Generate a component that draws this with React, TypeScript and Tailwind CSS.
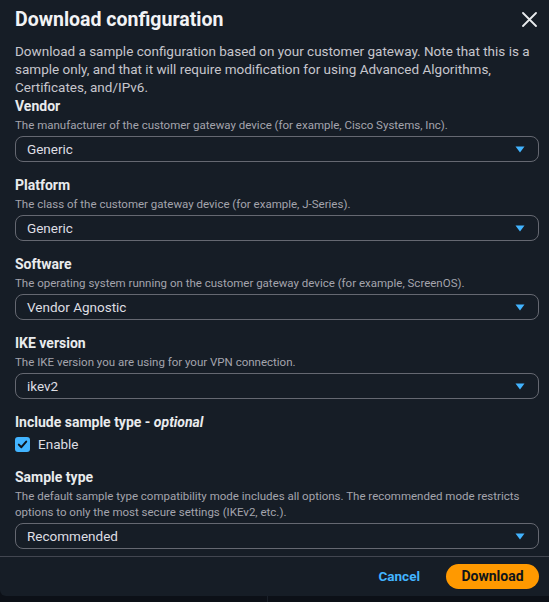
import React from "react";

function Caret() {
  return (
    <svg width="10" height="7" viewBox="0 0 10 7" className="shrink-0">
      <path d="M0.5 0.5 H9.5 L5 6.5 Z" fill="#42b4ff" />
    </svg>
  );
}

function Select({ value }: { value: string }) {
  return (
    <div className="mt-[3px] h-[26px] rounded-[8px] border border-[#656871] pl-[11px] pr-[13px] flex items-center justify-between text-[13.5px] leading-[18px] text-[#dedee3]">
      <span>{value}</span>
      <Caret />
    </div>
  );
}

function Field({
  label,
  desc,
  value,
  className = "",
}: {
  label: string;
  desc: React.ReactNode;
  value: string;
  className?: string;
}) {
  return (
    <div className={className}>
      <div className="text-[14px] leading-[18px] font-bold text-[#e9ebed]">{label}</div>
      <div className="pt-[2px] text-[11.5px] leading-[16px] text-[#a4a4ad] whitespace-nowrap">{desc}</div>
      <Select value={value} />
    </div>
  );
}

export default function App() {
  return (
    <div
      className="w-[549px] h-[602px] bg-[#0c1017] overflow-hidden flex flex-col"
      style={{ fontFamily: "Roboto, 'Noto Sans', Arial, sans-serif" }}
    >
      <div className="h-[596px] shrink-0 bg-[#161d26] rounded-bl-[6px] flex flex-col">
        <div className="flex items-start justify-between pl-[15px] pr-[12px] pt-[8px]">
          <h1 className="text-[19.5px] leading-[24px] font-bold text-[#f2f3f5]">Download configuration</h1>
          <svg width="15" height="15" viewBox="0 0 15 15" className="mt-[4px]">
            <path d="M1 1 L14 14 M14 1 L1 14" stroke="#e9ebed" strokeWidth="1.8" strokeLinecap="round" />
          </svg>
        </div>
        <div className="flex-1 overflow-hidden pl-[15px] pr-[10px]">
          <p className="mt-[10px] text-[13.5px] leading-[18px] text-[#c6c6cd] whitespace-nowrap">
            <span className="block">Download a sample configuration based on your customer gateway. Note that this is a</span>
            <span className="block">sample only, and that it will require modification for using Advanced Algorithms,</span>
            <span className="block">Certificates, and/IPv6.</span>
          </p>
          <div className="mt-[1px] flex flex-col gap-[14px]">
            <Field
              label="Vendor"
              desc="The manufacturer of the customer gateway device (for example, Cisco Systems, Inc)."
              value="Generic"
            />
            <Field
              label="Platform"
              desc="The class of the customer gateway device (for example, J-Series)."
              value="Generic"
            />
            <Field
              label="Software"
              desc="The operating system running on the customer gateway device (for example, ScreenOS)."
              value="Vendor Agnostic"
            />
            <Field
              label="IKE version"
              desc="The IKE version you are using for your VPN connection."
              value="ikev2"
            />
            <div>
              <div className="text-[14px] leading-[18px] font-bold text-[#e9ebed]">
                Include sample type - <i className="font-bold">optional</i>
              </div>
              <div className="mt-[3px] h-[20px] flex items-center gap-[8px]">
                <div className="w-[15px] h-[15px] rounded-[3px] bg-[#42b4ff] flex items-center justify-center">
                  <svg width="11" height="11" viewBox="0 0 11 11">
                    <path d="M1.8 5.6 L4.4 8.2 L9.2 2.6" fill="none" stroke="#0f141a" strokeWidth="2" strokeLinecap="round" strokeLinejoin="round" />
                  </svg>
                </div>
                <span className="text-[13.5px] leading-[18px] text-[#dedee3]">Enable</span>
              </div>
            </div>
            <Field
              label="Sample type"
              desc={
                <>
                  <span className="block">The default sample type compatibility mode includes all options. The recommended mode restricts</span>
                  <span className="block">options to only the most secure settings (IKEv2, etc.).</span>
                </>
              }
              value="Recommended"
            />
          </div>
        </div>
        <div className="h-[40px] shrink-0 border-t border-[#424650] pt-[7px] pr-[10px] flex justify-end items-start gap-[26px]">
          <span className="mt-[3px] text-[13.5px] leading-[18px] font-bold text-[#42b4ff]">Cancel</span>
          <div className="w-[93px] h-[25px] rounded-full bg-[#ff9900] flex items-center justify-center text-[14px] font-bold text-[#0f141a]">
            Download
          </div>
        </div>
      </div>
      <div className="flex-1 flex">
        <div className="w-[268px] border-r border-[#1a2029]" />
      </div>
    </div>
  );
}
